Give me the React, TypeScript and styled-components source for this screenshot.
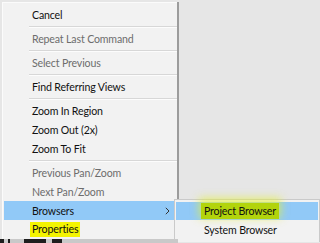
import styled, { createGlobalStyle } from "styled-components";

const GlobalStyle = createGlobalStyle`
  html, body {
    margin: 0;
    padding: 0;
    background: #e6e6e6;
  }
  body {
    font-family: Lato, "Open Sans", sans-serif;
    font-size: 10.6px;
    letter-spacing: -0.15px;
  }
`;

type Entry =
  | { kind: "item"; label: string; disabled?: boolean; active?: boolean; sub?: boolean; mark?: boolean }
  | { kind: "sep" };

const mainItems: Entry[] = [
  { kind: "item", label: "Cancel" },
  { kind: "sep" },
  { kind: "item", label: "Repeat Last Command", disabled: true },
  { kind: "sep" },
  { kind: "item", label: "Select Previous", disabled: true },
  { kind: "sep" },
  { kind: "item", label: "Find Referring Views" },
  { kind: "sep" },
  { kind: "item", label: "Zoom In Region" },
  { kind: "item", label: "Zoom Out (2x)" },
  { kind: "item", label: "Zoom To Fit" },
  { kind: "sep" },
  { kind: "item", label: "Previous Pan/Zoom", disabled: true },
  { kind: "item", label: "Next Pan/Zoom", disabled: true },
  { kind: "item", label: "Browsers", active: true, sub: true },
  { kind: "item", label: "Properties", mark: true },
];

export default function App() {
  return (
    <>
      <GlobalStyle />
      <Screen>
        <Menu>
          {mainItems.map((e, i) =>
            e.kind === "sep" ? (
              <Separator key={i} />
            ) : (
              <Item key={i} $active={e.active} $disabled={e.disabled}>
                {e.mark ? <Marker>{e.label}</Marker> : <span>{e.label}</span>}
                {e.sub && (
                  <Chevron width="5" height="8" viewBox="0 0 5 8">
                    <path d="M0.8 0.8 L4 4 L0.8 7.2" fill="none" stroke="#333" strokeWidth="1" />
                  </Chevron>
                )}
              </Item>
            )
          )}
        </Menu>
        <SubMenu>
          <SubItem $active>
            <Glow>Project Browser</Glow>
          </SubItem>
          <SubItem>System Browser</SubItem>
        </SubMenu>
        <Strip>
          <Bit $w={4} />
          <Gap $w={4} />
          <Bit $w={2} />
          <Gap $w={14} />
          <Bit $w={22} />
          <Gap $w={6} />
          <Bit $w={10} />
        </Strip>
      </Screen>
    </>
  );
}

const Screen = styled.div`
  position: relative;
  width: 320px;
  height: 243px;
  overflow: hidden;
  padding-top: 2px;
  box-sizing: border-box;
`;

const Menu = styled.div`
  width: 174px;
  margin-left: 2px;
  padding: 2px 0 1px 0;
  background: #f2f2f2;
  border-top: 1px solid #fbfbfb;
  border-left: 1px solid #fbfbfb;
  box-shadow: 2px 0 0 0 #9c9c9c, 1px 0 0 0 #d4d4d4;
`;

const Item = styled.div<{ $active?: boolean; $disabled?: boolean }>`
  display: flex;
  align-items: center;
  justify-content: space-between;
  height: 19px;
  padding: 0 7px 0 28px;
  margin-left: 1px;
  color: ${(p) => (p.$disabled ? "#6d6d6d" : "#111")};
  background: ${(p) => (p.$active ? "#91c9f7" : "transparent")};
`;

const Marker = styled.span`
  background: #f4f400;
  padding: 1px 2px;
  margin-left: -2px;
  line-height: 13px;
`;

const Chevron = styled.svg`
  display: block;
`;

const Separator = styled.div`
  height: 5px;
  display: flex;
  flex-direction: column;
  justify-content: center;
  padding-left: 26px;
  &::before {
    content: "";
    display: block;
    height: 1px;
    background: #d7d7d7;
  }
  &::after {
    content: "";
    display: block;
    height: 1px;
    background: #fcfcfc;
  }
`;

const SubMenu = styled.div`
  position: absolute;
  left: 174px;
  top: 199px;
  width: 142px;
  padding: 2px 1px 2px 1px;
  background: #f2f2f2;
  border: 1px solid #cacaca;
  border-bottom: none;
`;

const SubItem = styled.div<{ $active?: boolean }>`
  display: flex;
  align-items: center;
  height: 18px;
  padding-left: 25px;
  color: #111;
  background: ${(p) => (p.$active ? "#91c9f7" : "transparent")};
  & + & {
    height: 20px;
    padding-left: 28px;
  }
`;

const Glow = styled.span`
  background: #b2d40c;
  padding: 2px 3px;
  box-shadow: 0 -3px 8px 2px rgba(226, 240, 60, 0.7);
`;

const Strip = styled.div`
  position: absolute;
  left: 0;
  bottom: 0;
  width: 178px;
  height: 4px;
  display: flex;
  background: #c9c9c9;
`;

const Bit = styled.div<{ $w: number }>`
  width: ${(p) => p.$w}px;
  background: #1e1e1e;
`;

const Gap = styled.div<{ $w: number }>`
  width: ${(p) => p.$w}px;
`;
